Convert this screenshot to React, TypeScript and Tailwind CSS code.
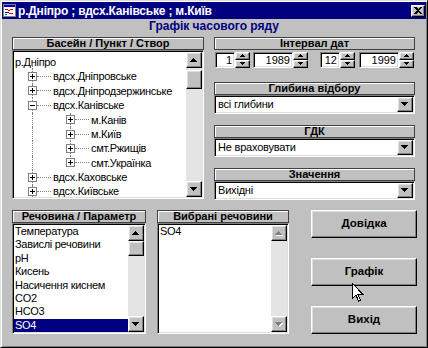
import React from 'react';

const sunken =
  'border border-t-[#808080] border-l-[#808080] border-r-white border-b-white shadow-[inset_1px_1px_0_#000,inset_-1px_-1px_0_#dfdfdf] p-[1px]';
const raised =
  'border border-t-white border-l-white border-r-black border-b-black shadow-[inset_-1px_-1px_0_#808080,inset_1px_1px_0_#dfdfdf] bg-[#c0c0c0]';
const header =
  'flex h-[13px] items-center justify-center border border-[#404040] bg-[#c0c0c0] text-[11px] font-bold leading-none shadow-[inset_1px_1px_0_#fff]';

function Arrow({ dir, disabled, size = 4 }: { dir: 'up' | 'down'; disabled?: boolean; size?: number }) {
  const w = size * 2 - 1;
  const rows = Array.from({ length: size }, (_, i) => (dir === 'up' ? i : size - 1 - i));
  return (
    <svg width={w + 1} height={size + 1} viewBox={`0 0 ${w + 1} ${size + 1}`} shapeRendering="crispEdges">
      {disabled &&
        rows.map((r, y) => (
          <rect key={'s' + y} x={size - 1 - r + 1} y={y + 1} width={r * 2 + 1} height={1} fill="#fff" />
        ))}
      {rows.map((r, y) => (
        <rect key={y} x={size - 1 - r} y={y} width={r * 2 + 1} height={1} fill={disabled ? '#808080' : '#000'} />
      ))}
    </svg>
  );
}

function ScrollBar({ thumb, disabled }: { thumb?: 'tree' | 'list'; disabled?: boolean }) {
  return (
    <div className="flex w-[16px] shrink-0 flex-col bg-[#e4e4e4]">
      <div className={`${raised} flex h-[16px] w-[16px] items-center justify-center`}>
        <Arrow dir="up" disabled={disabled} />
      </div>
      <div className="flex-1">
        {thumb === 'tree' && <div className={`${raised} mt-[2px] h-[19px] w-[16px]`} />}
        {thumb === 'list' && <div className={`${raised} h-[15px] w-[16px]`} />}
      </div>
      <div className={`${raised} flex h-[16px] w-[16px] items-center justify-center`}>
        <Arrow dir="down" disabled={disabled} />
      </div>
    </div>
  );
}

function Spin({ value, editW }: { value: string; editW: string }) {
  return (
    <div className="flex h-[16px]">
      <div className={`${sunken} ${editW} flex items-center justify-end bg-white pr-[2px] text-[11px]`}>{value}</div>
      <div className="flex w-[15px] flex-col">
        <div className={`${raised} flex h-[8px] items-center justify-center`}>
          <Arrow dir="up" size={3} />
        </div>
        <div className={`${raised} flex h-[8px] items-center justify-center`}>
          <Arrow dir="down" size={3} />
        </div>
      </div>
    </div>
  );
}

function Combo({ label, value, className }: { label: string; value: string; className?: string }) {
  return (
    <div className={className}>
      <div className={header}>{label}</div>
      <div className={`${sunken} flex h-[19px] bg-white`}>
        <div className="flex flex-1 items-center pl-[2px] text-[11px] tracking-[-0.2px]">{value}</div>
        <div className={`${raised} flex w-[16px] items-center justify-center`}>
          <Arrow dir="down" />
        </div>
      </div>
    </div>
  );
}

function Box({ open }: { open?: boolean }) {
  return (
    <svg width="9" height="9" viewBox="0 0 9 9" shapeRendering="crispEdges" className="relative z-10 shrink-0">
      <rect x="0.5" y="0.5" width="8" height="8" fill="#fff" stroke="#808080" />
      <rect x="2" y="4" width="5" height="1" fill="#000" />
      {!open && <rect x="4" y="2" width="1" height="5" fill="#000" />}
    </svg>
  );
}

const tree = [
  { t: 'р.Дніпро', lvl: 0 },
  { t: 'вдсх.Дніпровське', lvl: 1 },
  { t: 'вдсх.Дніпродзержинське', lvl: 1 },
  { t: 'вдсх.Канівське', lvl: 1, open: true },
  { t: 'м.Канів', lvl: 2 },
  { t: 'м.Київ', lvl: 2 },
  { t: 'смт.Ржищів', lvl: 2 },
  { t: 'смт.Українка', lvl: 2, last: true },
  { t: 'вдсх.Каховське', lvl: 1 },
  { t: 'вдсх.Київське', lvl: 1 },
];

const params = ['Температура', 'Завислі речовини', 'pH', 'Кисень', 'Насичення киснем', 'CO2', 'HCO3', 'SO4'];

export default function App() {
  return (
    <div className="relative flex h-[348px] w-[428px] flex-col overflow-hidden border border-t-[#dfdfdf] border-l-[#dfdfdf] border-r-black border-b-black bg-[#c0c0c0] p-[1px] font-['Liberation_Sans',Arial,sans-serif] text-black shadow-[inset_1px_1px_0_#fff,inset_-1px_-1px_0_#808080]">
      {/* title bar */}
      <div className="flex h-[17px] items-center bg-[#000080]">
        <svg width="13" height="13" viewBox="0 0 13 13" className="ml-[1px]" shapeRendering="crispEdges">
          <rect x="0" y="0" width="13" height="13" fill="#808080" />
          <rect x="1" y="1" width="11" height="11" fill="#fff" />
          <rect x="1" y="1" width="11" height="2" fill="#0000c0" />
          <rect x="2" y="5" width="3" height="1" fill="#e00000" />
          <rect x="5" y="6" width="2" height="1" fill="#e00000" />
          <rect x="7" y="5" width="3" height="1" fill="#e00000" />
          <rect x="2" y="8" width="4" height="1" fill="#0000e0" />
          <rect x="6" y="9" width="4" height="1" fill="#e00000" />
          <rect x="2" y="10" width="2" height="1" fill="#008000" />
        </svg>
        <div className="ml-[2px] flex-1 text-[12px] font-bold leading-none tracking-[-0.2px] text-white">
          р.Дніпро ; вдсх.Канівське ; м.Київ
        </div>
        <div className={`${raised} mr-[1px] flex h-[12px] w-[14px] items-center justify-center`}>
          <svg width="8" height="7" viewBox="0 0 8 7" shapeRendering="crispEdges">
            <path d="M0 0h2l2 2 2-2h2L5 3.5 8 7H6L4 5 2 7H0l3-3.5z" fill="#000" />
          </svg>
        </div>
      </div>

      <div className="flex h-[14px] items-center justify-center text-[12px] font-bold text-[#000080]">
        Графік часового ряду
      </div>

      {/* upper part */}
      <div className="mt-[4px] flex pl-[10px]">
        <div className="w-[192px]">
          <div className={header}>Басейн / Пункт / Створ</div>
          <div className={`${sunken} flex h-[149px] bg-white`}>
            <div className="flex-1 overflow-hidden pt-[3px] text-[11px] tracking-[-0.3px]">
              {tree.map((n, i) => (
                <div key={i} className="relative flex h-[14.4px] items-center whitespace-nowrap">
                  {n.lvl === 0 ? (
                    <span className="absolute bottom-0 left-[18px] top-[9px] border-l border-dotted border-[#808080]" />
                  ) : (
                    <span className="absolute bottom-0 left-[18px] top-0 border-l border-dotted border-[#808080]" />
                  )}
                  {n.lvl === 2 && (
                    <span
                      className={`absolute left-[56px] top-0 border-l border-dotted border-[#808080] ${n.last ? 'h-[7px]' : 'bottom-0'}`}
                    />
                  )}
                  {n.lvl === 0 && <span className="pl-[1px]">{n.t}</span>}
                  {n.lvl > 0 && (
                    <>
                      <span className={n.lvl === 1 ? 'w-[14px] shrink-0' : 'w-[52px] shrink-0'} />
                      <Box open={n.open} />
                      <span className="w-[14px] shrink-0 border-t border-dotted border-[#808080]" />
                      <span className="ml-[2px]">{n.t}</span>
                    </>
                  )}
                </div>
              ))}
            </div>
            <ScrollBar thumb="tree" />
          </div>
        </div>

        <div className="ml-[10px] w-[201px]">
          <div className={header}>Інтервал дат</div>
          <div className="mt-[2px] flex">
            <div className="ml-[1px]">
              <Spin value="1" editW="w-[20px]" />
            </div>
            <div className="ml-[3px]">
              <Spin value="1989" editW="w-[40px]" />
            </div>
            <div className="ml-[12px]">
              <Spin value="12" editW="w-[20px]" />
            </div>
            <div className="ml-[4px]">
              <Spin value="1999" editW="w-[40px]" />
            </div>
          </div>
          <Combo className="mt-[14px]" label="Глибина відбору" value="всі глибини" />
          <Combo className="mt-[11px]" label="ГДК" value="Не враховувати" />
          <Combo className="mt-[11px]" label="Значення" value="Вихідні" />
        </div>
      </div>

      {/* lower part */}
      <div className="mt-[10px] flex pl-[10px]">
        <div className="w-[134px]">
          <div className={header}>Речовина / Параметр</div>
          <div className={`${sunken} flex h-[111px] bg-white`}>
            <div className="flex-1 text-[11px] tracking-[-0.3px]">
              {params.map((p) => (
                <div
                  key={p}
                  className={`h-[13.4px] pl-[1px] leading-[13.4px] ${p === 'SO4' ? 'bg-[#000080] text-white' : ''}`}
                >
                  {p}
                </div>
              ))}
            </div>
            <ScrollBar thumb="list" />
          </div>
        </div>

        <div className="ml-[11px] w-[132px]">
          <div className={header}>Вибрані речовини</div>
          <div className={`${sunken} flex h-[111px] bg-white`}>
            <div className="flex-1 text-[11px] tracking-[-0.3px]">
              <div className="h-[13.4px] pl-[1px] leading-[13.4px]">SO4</div>
            </div>
            <ScrollBar disabled />
          </div>
        </div>

        <div className="ml-[22px] flex w-[106px] flex-col">
          <button className={`${raised} h-[28px] text-[11.5px] font-bold`}>Довідка</button>
          <button className={`${raised} mt-[20px] h-[28px] text-[11.5px] font-bold`}>Графік</button>
          <button className={`${raised} mt-[20px] h-[28px] text-[11.5px] font-bold`}>Вихід</button>
        </div>
      </div>

      {/* mouse pointer */}
      <svg
        width="12"
        height="19"
        viewBox="0 0 12 19"
        className="pointer-events-none absolute left-[351px] top-[282px]"
        shapeRendering="crispEdges"
      >
        <path d="M0.5 0.5v15l3.5-3.5 2.5 6 2-1-2.5-5.5h5z" fill="#fff" stroke="#000" />
      </svg>
    </div>
  );
}
